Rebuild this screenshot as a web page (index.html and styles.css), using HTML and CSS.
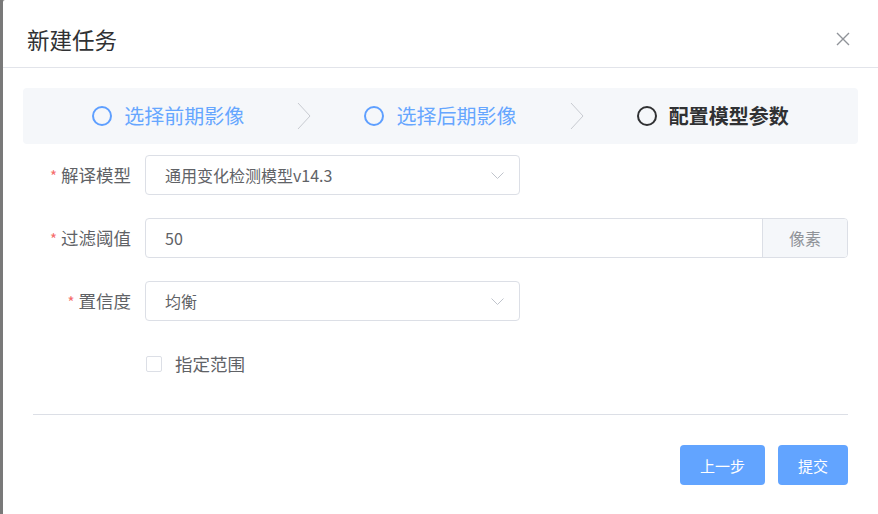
FILE: index.html
```html
<!DOCTYPE html>
<html lang="zh-CN">
<head>
<meta charset="utf-8">
<title>新建任务</title>
<link rel="stylesheet" href="styles.css">
</head>
<body>
<div class="dialog">
  <div class="dialog-header">
    <span class="dialog-title">新建任务</span>
    <svg class="close-icon" width="14" height="14" viewBox="0 0 14 14"><path d="M1 1L13 13M13 1L1 13" stroke="#909399" stroke-width="1.4" fill="none"/></svg>
  </div>
  <div class="dialog-body">
    <div class="steps">
      <div class="step step-done">
        <span class="step-icon"></span>
        <span class="step-title">选择前期影像</span>
      </div>
      <svg class="step-arrow" width="14" height="28" viewBox="0 0 14 28"><polyline points="1,1 13,14 1,27" fill="none" stroke="#c8cbd1" stroke-width="1"/></svg>
      <div class="step step-done">
        <span class="step-icon"></span>
        <span class="step-title">选择后期影像</span>
      </div>
      <svg class="step-arrow" width="14" height="28" viewBox="0 0 14 28"><polyline points="1,1 13,14 1,27" fill="none" stroke="#c8cbd1" stroke-width="1"/></svg>
      <div class="step step-current">
        <span class="step-icon"></span>
        <span class="step-title">配置模型参数</span>
      </div>
    </div>

    <div class="form">
      <div class="form-row">
        <label class="form-label required">解译模型</label>
        <div class="select">
          <span class="select-value">通用变化检测模型v14.3</span>
          <svg class="select-arrow" width="13" height="7" viewBox="0 0 13 7"><polyline points="0.5,0.5 6.5,6.5 12.5,0.5" fill="none" stroke="#c0c4cc" stroke-width="1"/></svg>
        </div>
      </div>
      <div class="form-row">
        <label class="form-label required">过滤阈值</label>
        <div class="input-group">
          <span class="input-value">50</span>
          <span class="input-append">像素</span>
        </div>
      </div>
      <div class="form-row">
        <label class="form-label required">置信度</label>
        <div class="select">
          <span class="select-value">均衡</span>
          <svg class="select-arrow" width="13" height="7" viewBox="0 0 13 7"><polyline points="0.5,0.5 6.5,6.5 12.5,0.5" fill="none" stroke="#c0c4cc" stroke-width="1"/></svg>
        </div>
      </div>
      <div class="form-row check-row">
        <span class="form-label"></span>
        <span class="checkbox"></span>
        <span class="check-label">指定范围</span>
      </div>
    </div>
    <div class="divider"></div>
    <div class="footer">
      <button class="btn btn-wide">上一步</button>
      <button class="btn">提交</button>
    </div>
  </div>
</div>
</body>
</html>
```

FILE: styles.css
```css
html, body {
  margin: 0;
  padding: 0;
  width: 878px;
  height: 514px;
  overflow: hidden;
  background: #797979;
  font-family: "Noto Sans CJK SC", "Noto Sans", sans-serif;
}

.dialog {
  margin-left: 3px;
  width: 875px;
  height: 514px;
  background: #ffffff;
  border-radius: 2px 0 0 0;
}

.dialog-header {
  height: 68px;
  box-sizing: border-box;
  padding: 24px 0 0 24px;
  border-bottom: 1px solid #e2e4ea;
  display: flex;
  align-items: flex-start;
  justify-content: space-between;
}

.dialog-title {
  font-size: 22.5px;
  line-height: 30px;
  color: #303133;
}

.close-icon {
  margin: 8px 28px 0 0;
}

.dialog-body {
  padding: 20px 20px 0 20px;
}

.steps {
  height: 56px;
  background: #f5f7fa;
  border-radius: 4px;
  padding: 0 16px;
  display: grid;
  grid-template-columns: 1fr 14px 1fr 14px 1fr;
  align-items: center;
}

.step {
  display: flex;
  align-items: center;
  justify-content: center;
  gap: 12px;
}

.step-icon {
  width: 16px;
  height: 16px;
  border-radius: 50%;
  border: 2px solid #5e9fff;
}

.step-title {
  font-size: 20px;
  line-height: 28px;
  color: #66a6ff;
}

.step-current .step-icon {
  border-color: #303133;
}

.step-current .step-title {
  color: #303133;
  font-weight: 700;
}

.step-arrow {
  display: block;
}

.form {
  padding: 11px 10px 0 10px;
}

.form-row {
  display: flex;
  align-items: center;
  height: 40px;
  margin-bottom: 23px;
}

.form-label {
  width: 112px;
  flex: none;
  box-sizing: border-box;
  padding-right: 14px;
  text-align: right;
  font-size: 17.5px;
  line-height: 24px;
  color: #606266;
}

.form-label.required::before {
  content: "*";
  color: #f56c6c;
  margin-right: 4px;
  font-size: 15px;
}

.select {
  width: 375px;
  height: 40px;
  box-sizing: border-box;
  border: 1px solid #dcdfe6;
  border-radius: 4px;
  display: flex;
  align-items: center;
  justify-content: space-between;
  padding: 0 15px 0 19px;
}

.select-value, .input-value {
  font-size: 16px;
  line-height: 22px;
  color: #606266;
}

.input-group {
  flex: 1;
  height: 40px;
  box-sizing: border-box;
  border: 1px solid #dcdfe6;
  border-radius: 4px;
  display: flex;
  align-items: stretch;
  overflow: hidden;
}

.input-value {
  flex: 1;
  display: flex;
  align-items: center;
  padding-left: 19px;
}

.input-append {
  width: 84px;
  background: #f5f7fa;
  border-left: 1px solid #dcdfe6;
  display: flex;
  align-items: center;
  justify-content: center;
  font-size: 16px;
  color: #909399;
}

.check-row {
  margin-bottom: 0;
}

.checkbox {
  width: 14px;
  height: 14px;
  border: 1px solid #dcdfe6;
  border-radius: 2px;
  margin-left: 1px;
  flex: none;
}

.check-label {
  margin-left: 13px;
  font-size: 17.5px;
  line-height: 24px;
  color: #606266;
}

.divider {
  margin: 30px 10px 0 10px;
  height: 1px;
  background: #dcdfe6;
}

.footer {
  display: flex;
  justify-content: flex-end;
  gap: 13px;
  padding: 30px 10px 0 0;
}

.btn {
  width: 70px;
  height: 40px;
  border: none;
  border-radius: 4px;
  background: #62a4ff;
  color: #ffffff;
  font-family: "Noto Sans CJK SC", "Noto Sans", sans-serif;
  font-size: 15px;
  padding: 0;
}

.btn-wide {
  width: 85px;
}
```
